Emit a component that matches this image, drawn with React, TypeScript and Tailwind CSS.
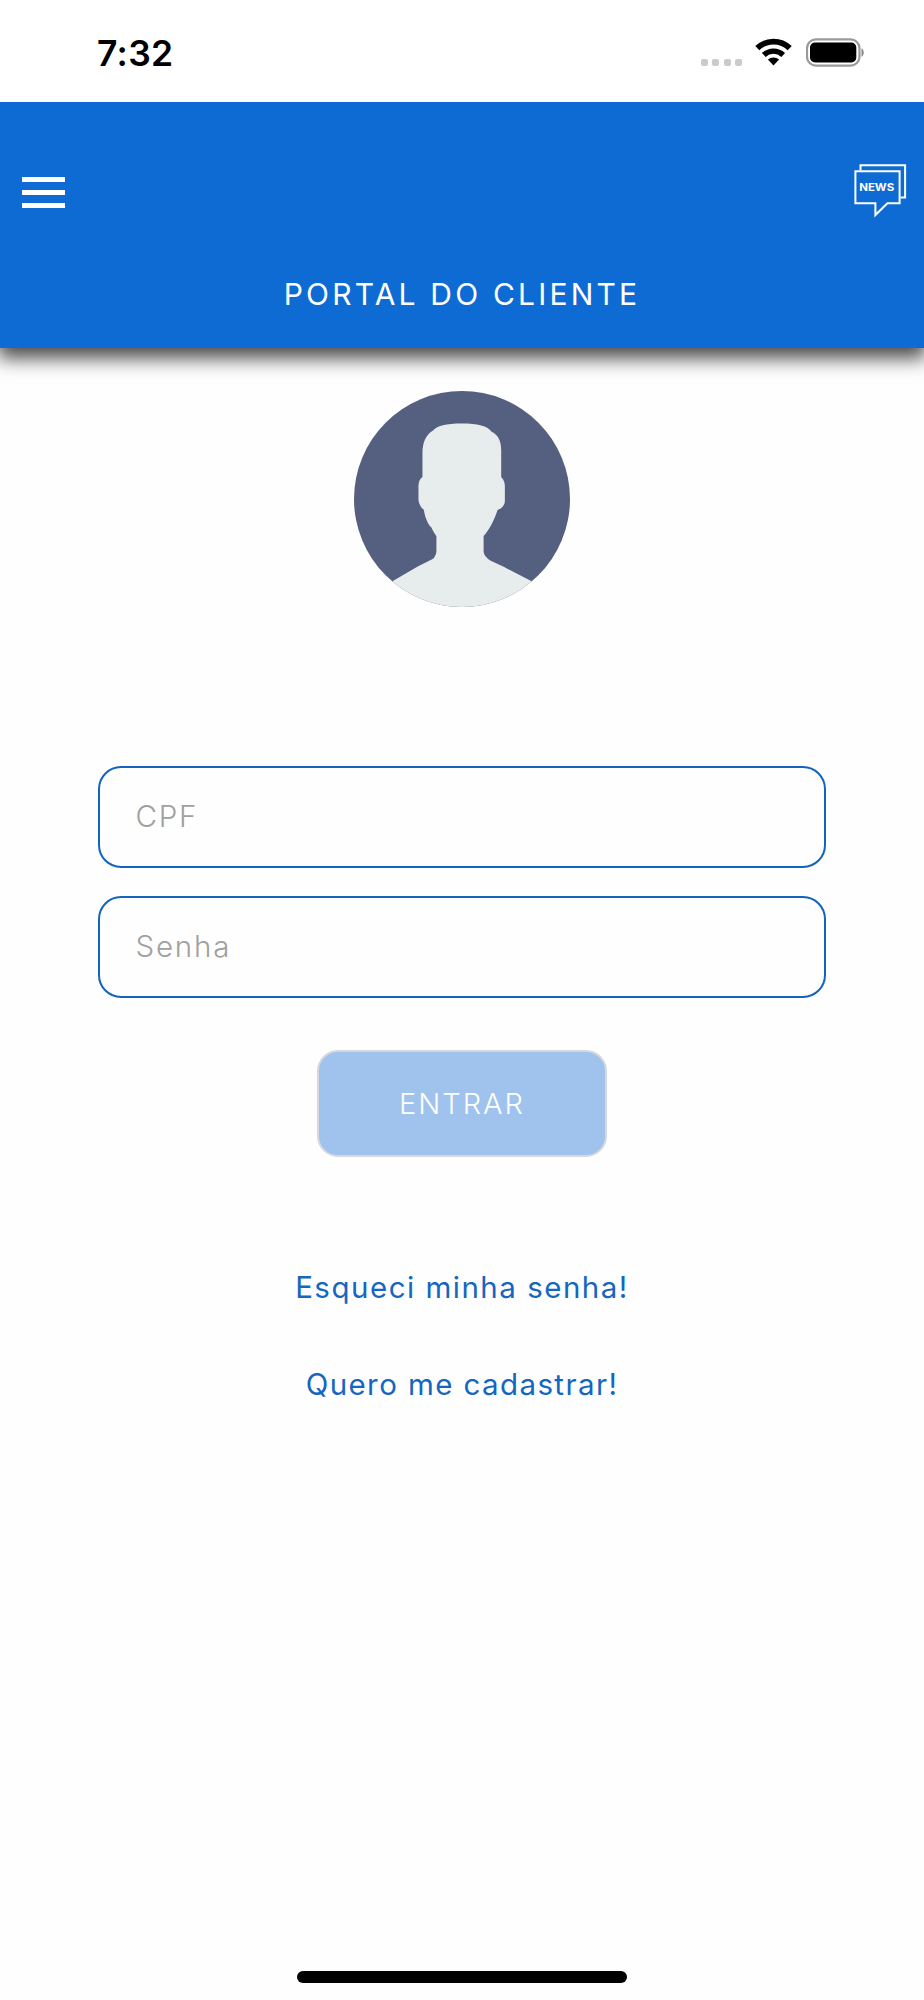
const StatusBar = () => {
  return (
    <div className="relative z-10 flex h-[102px] items-start justify-between bg-white pr-[60px] pl-[97px]">
      <span className="mt-[29px] text-[35.5px] leading-[50px] font-semibold tracking-[0.3px] text-black">
        7:32
      </span>
      <div className="mt-[38px] flex h-[28px] items-start">
        <div className="mt-[20.5px] mr-[13px] flex gap-[4.5px]">
          {[0, 1, 2, 3].map((dot) => (
            <span key={dot} className="size-[7px] rounded-[2px] bg-[#cbcbcb]" />
          ))}
        </div>
        <WifiIcon />
        <BatteryIcon />
      </div>
    </div>
  );
};

const WifiIcon = () => (
  <svg className="mr-[14px] h-[28px] w-[37px]" viewBox="0 0 37 28" fill="none">
    <path d="M2.3 10.2a23.3 23.3 0 0 1 32.4 0" stroke="#000" strokeWidth="5.8" />
    <path d="M8.8 17a14.2 14.2 0 0 1 19.4 0" stroke="#000" strokeWidth="5.4" />
    <path d="M12.9 21.6a8.3 8.3 0 0 1 11.2 0L18.5 27.4z" fill="#000" />
  </svg>
);

const BatteryIcon = () => (
  <svg className="h-[29px] w-[58px]" viewBox="0 0 58 29" fill="none">
    <rect x="1" y="1.3" width="52.5" height="26.4" rx="9" stroke="#9a9a9a" strokeWidth="2.2" />
    <rect x="4" y="4.6" width="46.3" height="19.8" rx="5" fill="#000" />
    <path d="M55.5 10.2c3 1.2 3 7.4 0 8.6z" fill="#8a8a8a" />
  </svg>
);

const NewsIcon = () => (
  <svg className="h-[54px] w-[54px]" viewBox="0 0 54 54" fill="none">
    <path d="M6.5 6V1.2h44.6v32.2H46.5" stroke="#fff" strokeWidth="2" />
    <path
      d="M1.4 7.2h44.2v32H33.4L21.4 51v-11.8H1.4z"
      stroke="#fff"
      strokeWidth="2"
    />
    <text
      x="5.2"
      y="27.2"
      fill="#fff"
      className="text-[11px] font-bold"
      textLength="35"
      lengthAdjust="spacingAndGlyphs"
    >
      NEWS
    </text>
  </svg>
);

const Header = () => {
  return (
    <header className="flex h-[246px] flex-col bg-[#0d6bd3] shadow-[0_8px_18px_2px_rgba(0,0,0,0.72)]">
      <div className="flex justify-between pt-[62px] pr-[16.5px] pl-[21.5px]">
        <button className="flex h-[44px] flex-col gap-[8.4px] pt-[13px]">
          <span className="h-[4.6px] w-[43.5px] bg-white" />
          <span className="h-[4.6px] w-[43.5px] bg-white" />
          <span className="h-[4.6px] w-[43.5px] bg-white" />
        </button>
        <button>
          <NewsIcon />
        </button>
      </div>
      <h1 className="mt-[54px] text-center text-[30px] leading-[44px] tracking-[3.2px] text-white">
        PORTAL DO CLIENTE
      </h1>
    </header>
  );
};

const Avatar = () => (
  <svg className="mt-[42.5px] size-[216px]" viewBox="0 0 650 650">
    <clipPath id="avatar-circle">
      <circle cx="325" cy="325" r="325" />
    </clipPath>
    <g clipPath="url(#avatar-circle)">
      <path d="M0 0H650V650H0Z" fill="#556080" />
      <path
        d="M324 98C278 98 248 106 238 119C215 132 206 157 206 187V259C196 267 194 276 194 293V324C194 340 203 352 210 357C215 387 225 403 233 411C239 424 244 431 248 437V480C248 492 242 504 234 507L193 527L117 572V650H533V572L452 530L410 510C399 502 390 494 390 480V436C404 421 420 395 432 358C446 353 454 342 454 330V287C454 273 449 266 443 259V180C443 150 434 133 414 123C403 105 371 98 324 98Z"
        fill="#e7eded"
      />
    </g>
  </svg>
);

type FieldProps = {
  placeholder: string;
  type?: string;
  className: string;
};

const Field = ({ placeholder, type = "text", className }: FieldProps) => (
  <input
    type={type}
    placeholder={placeholder}
    className={`h-[102px] w-[728px] rounded-[23px] border-[2.4px] border-[#1264bd] pl-[35.5px] text-[29.5px] leading-[40px] font-light text-[#555] outline-none placeholder:text-[#a0a0a0] ${className}`}
  />
);

const LoginForm = () => {
  return (
    <form className="mt-[159.5px] flex flex-col items-center">
      <Field placeholder="CPF" className="pb-[2px] tracking-[1.8px]" />
      <Field
        placeholder="Senha"
        type="password"
        className="mt-[28px] pb-[2px] tracking-[1.8px]"
      />
      <button
        type="button"
        className="mt-[52px] h-[107px] w-[290px] rounded-[21px] border-2 border-[#d5d9dd] bg-[#9fc3ec] text-[29px] font-light tracking-[2px] text-white"
      >
        ENTRAR
      </button>
    </form>
  );
};

export default function App() {
  return (
    <div className="flex h-[2000px] w-[924px] flex-col bg-[#fefefe] font-['Inter','Liberation_Sans',sans-serif]">
      <StatusBar />
      <Header />
      <main className="flex flex-1 flex-col items-center">
        <Avatar />
        <LoginForm />
        <a className="mt-[108px] text-[29.5px] leading-[44px] tracking-[1.5px] text-[#1566bf]">
          Esqueci minha senha!
        </a>
        <a className="mt-[53px] text-[29.5px] leading-[44px] tracking-[1.4px] text-[#1566bf]">
          Quero me cadastrar!
        </a>
      </main>
      <div className="mx-auto mb-[17px] h-[12px] w-[330px] rounded-full bg-black" />
    </div>
  );
}
